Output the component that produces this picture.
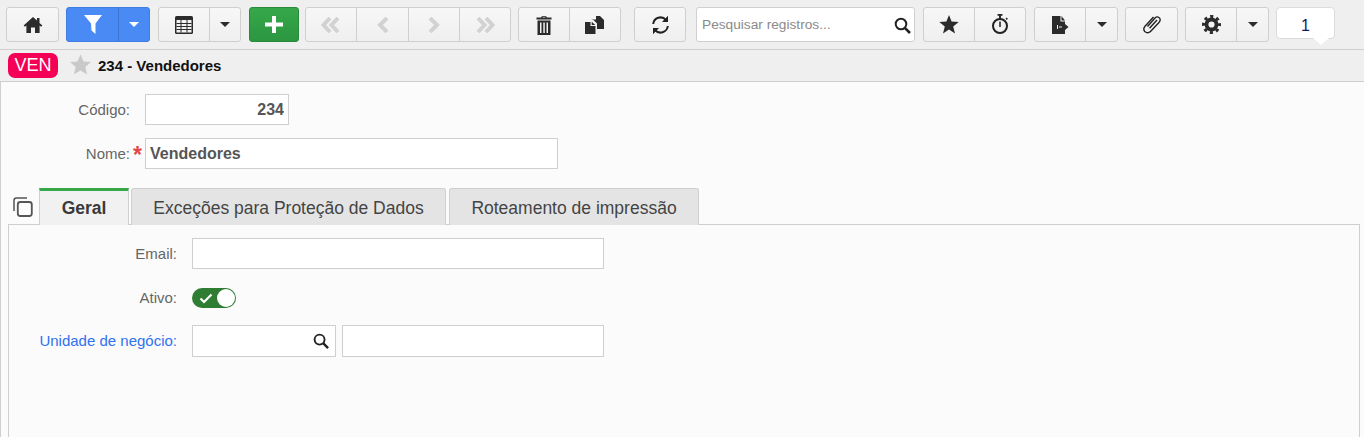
<div class="page">
  <header class="toolbar">
    <div class="group w53"><button class="btn f1" aria-label="Início">
      <svg width="20" height="18" viewBox="0 0 20 18"><path class="ic" d="M10 1 L0.6 9.6 L2 10.8 L3.4 9.6 V17 H8 V11.5 H12 V17 H16.6 V9.6 L18 10.8 L19.4 9.6 L16.5 6.9 V2 H14 V4.6 Z"/></svg>
    </button></div>

    <div class="group blue mgl7"><button class="btn w51" aria-label="Filtro">
      <svg width="18" height="19" viewBox="0 0 18 19"><path fill="#fff" d="M0 0 H18 L11.500 8.500 V19 L7.500 15.500 L7 8.500 Z"/></svg>
    </button><button class="btn w31" aria-label="Opções de filtro"><i class="caret white"></i></button></div>

    <div class="group mgl8"><button class="btn w50" aria-label="Tabela">
      <svg width="18" height="18" viewBox="0 0 18 18"><rect class="ic" width="18" height="18" rx="1.5"/><path fill="#f2f2f2" d="M1.5 4h15v12.5h-15z"/><path class="ic" d="M1.5 7h15v1h-15zM1.5 10h15v1h-15zM1.5 13h15v1h-15zM5.500 4h1v12.5h-1zM11.500 4h1v12.500h-1z"/></svg>
    </button><button class="btn w31" aria-label="Opções de tabela"><i class="caret"></i></button></div>

    <div class="group green mgl8 w50"><button class="btn f1" aria-label="Novo">
      <svg width="18" height="17" viewBox="0 0 18 17"><path fill="#fff" d="M7 0h4v6.500h7v4h-7V17H7v-6.500H0v-4h7z"/></svg>
    </button></div>

    <div class="group mgl6">
      <button class="btn w50" aria-label="Primeiro"><svg width="20" height="16" viewBox="0 0 20 16"><path class="nav" d="M9 1 L2.500 8 L9 15M17 1 L10.500 8 L17 15"/></svg></button><button class="btn w52" aria-label="Anterior"><svg width="12" height="16" viewBox="0 0 12 16"><path class="nav" d="M10 1 L3 8 L10 15"/></svg></button><button class="btn w51" aria-label="Próximo"><svg width="12" height="16" viewBox="0 0 12 16"><path class="nav" d="M2 1 L9 8 L2 15"/></svg></button><button class="btn w51" aria-label="Último"><svg width="20" height="16" viewBox="0 0 20 16"><path class="nav" d="M3 1 L9.500 8 L3 15M11 1 L17.500 8 L11 15"/></svg></button>
    </div>

    <div class="group mgl7">
      <button class="btn w50" aria-label="Excluir"><svg width="16" height="20" viewBox="0 0 16 20"><path class="ic" d="M5 2.500 C5 .5 11 .5 11 2.500 H15.500 V4.500 H.5 V2.500 Z M1.500 5.500 H14.500 V20 H1.500 Z"/><path fill="#f2f2f2" d="M4 7.500h1.500V18H4zM7.300 7.500h1.500V18H7.300zM10.500 7.500H12V18h-1.500zM6.300 2.400 C6.500 1.500 9.500 1.500 9.700 2.400Z"/></svg></button><button class="btn w51" aria-label="Copiar"><svg width="20" height="18" viewBox="0 0 20 18"><path class="ic" d="M6 3.500 H11 V0 H15 L19 4 V13 H12 V7.500 L8.500 4 Z"/><path class="ic" d="M0 6 H5.500 V10 H10.500 V18 H0 Z"/><path class="ic" d="M6.700 5.800 L10.300 9 H6.700Z"/></svg></button>
    </div>

    <div class="group mgl13 w52"><button class="btn f1" aria-label="Atualizar">
      <svg width="19" height="20" viewBox="0 0 19 20"><path fill="none" stroke="#222" stroke-width="2" d="M2.200 9 A7.300 7.300 0 0 1 15 5M16.800 11 A7.300 7.300 0 0 1 4 15"/><path fill="#222" d="M17 .8V7h-6zM2 19.200V13h6z"/></svg>
    </button></div>

    <div class="search">
      <span>Pesquisar registros...</span>
      <svg width="17" height="17" viewBox="0 0 17 17"><circle cx="7" cy="7" r="5.300" fill="none" stroke="#222" stroke-width="2"/><path stroke="#222" stroke-width="2.600" d="M10.800 10.800 L16 16"/></svg>
    </div>

    <div class="group mgl8">
      <button class="btn w50" aria-label="Favorito"><svg width="20" height="19" viewBox="0 0 20 19"><path class="ic" d="M10 0 L12.600 6.600 L19.700 7 L14.200 11.500 L16 18.500 L10 14.600 L4 18.500 L5.800 11.500 L.3 7 L7.400 6.600 Z"/></svg></button><button class="btn w51" aria-label="Cronômetro"><svg width="20" height="21" viewBox="0 0 20 21"><path class="ic" d="M7.500 0h5v1.800h-5zM9 1.500h2V5H9z"/><circle cx="10" cy="12" r="7" fill="none" stroke="#222" stroke-width="2"/><path class="ic" d="M9.200 7.500h1.600v5.500H9.200zM16.500 3.500l1.500 1.200-1.200 1.200-1.300-1.200z"/></svg></button>
    </div>

    <div class="group mgl8">
      <button class="btn w50" aria-label="Exportar"><svg width="17" height="18" viewBox="0 0 17 18"><path class="ic" d="M0 0 H8.500 V5.500 H13 V8 L16.500 11 L13 14 V18 H0 Z"/><path class="ic" d="M9.500 0 L13 4.500 H9.500 Z"/><path fill="#f2f2f2" d="M5 9h1v4H5zM7 10.500h3v1H7z"/></svg></button><button class="btn w32" aria-label="Opções de exportação"><i class="caret"></i></button>
    </div>

    <div class="group mgl7 w53"><button class="btn f1" aria-label="Anexos">
      <svg width="20" height="19" viewBox="0 0 20 19"><path fill="none" stroke="#222" stroke-width="1.400" d="M5.500 11.500 L13 3 C15 .8 18 2.200 18.200 4.500 C18.300 6 17.500 7 16.500 8.100 L8.500 16.500 C6.500 18.600 2.600 18 1.900 15 C1.500 13.500 2 12.300 3 11.200 L11.500 2"/><path fill="none" stroke="#222" stroke-width="1.400" d="M7.500 13.200 L15 5"/></svg>
    </button></div>

    <div class="group mgl7">
      <button class="btn w50" aria-label="Configurações"><svg width="19" height="19" viewBox="0 0 19 19"><circle cx="9.500" cy="9.500" r="5" fill="none" stroke="#2b2b2b" stroke-width="3.800"/><circle cx="9.500" cy="9.500" r="8" fill="none" stroke="#2b2b2b" stroke-width="3" stroke-dasharray="3.100 3.183" stroke-dashoffset="1.550"/></svg></button><button class="btn w32" aria-label="Opções de configuração"><i class="caret"></i></button>
    </div>

    <div class="count">1</div>
  </header>

  <div class="titlebar">
    <span class="tag">VEN</span>
    <svg class="fav" width="21" height="21" viewBox="0 0 22 21"><path fill="#c9c9c9" d="M11 0 L14.200 7.300 L22 8 L16.100 13.100 L17.900 21 L11 16.800 L4.100 21 L5.900 13.100 L0 8 L7.800 7.300 Z"/></svg>
    <strong>234 - Vendedores</strong>
  </div>

  <main class="content">
    <div class="row first">
      <label class="label-top" for="codigo">Código:</label>
      <span class="req"></span>
      <input id="codigo" class="code" value="234" readonly />
    </div>
    <div class="row second">
      <label class="label-top" for="nome">Nome:</label>
      <span class="req">*</span>
      <input id="nome" class="name" value="Vendedores" readonly />
    </div>

    <div class="tabs">
      <svg class="copy" width="20" height="20" viewBox="0 0 20 20"><path fill="none" stroke="#555" stroke-width="1.500" d="M1 14 V3.500 Q1 1 3.500 1 H14"/><rect x="4.800" y="5" width="14" height="14" rx="2.500" fill="none" stroke="#555" stroke-width="1.800"/></svg>
      <div class="tab active">Geral</div>
      <div class="tab t2">Exceções para Proteção de Dados</div>
      <div class="tab t3">Roteamento de impressão</div>
    </div>

    <section class="panel">
      <div class="frow r1">
        <label for="email">Email:</label>
        <input id="email" class="wide" />
      </div>
      <div class="frow r2">
        <span class="lbl">Ativo:</span>
        <span class="toggle">
          <svg width="14" height="11" viewBox="0 0 14 11"><path fill="none" stroke="#fff" stroke-width="2.200" d="M1.500 5.500 L5 9 L12.500 1.500"/></svg>
          <i></i>
        </span>
      </div>
      <div class="frow r3">
        <span class="lbl link">Unidade de negócio:</span>
        <div class="lookup">
          <svg width="16" height="16" viewBox="0 0 17 17"><circle cx="7" cy="7" r="5.300" fill="none" stroke="#222" stroke-width="2"/><path stroke="#222" stroke-width="2.600" d="M10.800 10.800 L16 16"/></svg>
        </div>
        <div class="desc"></div>
      </div>
    </section>
  </main>
</div>

<style>
  :global(body) { margin: 0; background: #fbfbfb; }
  .page { width: 1364px; height: 437px; overflow: hidden; font-family: "Liberation Sans", Arial, sans-serif; color: #444; }
  .toolbar { box-sizing: border-box; padding: 7px 0 0 6px; display: flex; align-items: flex-start; background: #efefef; border-bottom: 1px solid #cfcfcf; height: 50px; }
  .group { display: flex; height: 35px; box-sizing: border-box; border: 1px solid #cfcfcf; border-radius: 3px; background: linear-gradient(#f7f7f7, #efefef); overflow: hidden; }
  .btn { display: flex; align-items: center; justify-content: center; height: 100%; padding: 0; border: 0; background: transparent; border-left: 1px solid #cfcfcf; box-sizing: border-box; }
  .btn:first-child { border-left: 0; }
  .f1 { flex: 1; }
  .w31 { width: 31px; } .w32 { width: 32px; } .w50 { width: 50px; } .w51 { width: 51px; } .w52 { width: 52px; } .w53 { width: 53px; }
  .mgl6 { margin-left: 6px; } .mgl7 { margin-left: 7px; } .mgl8 { margin-left: 8px; } .mgl13 { margin-left: 13px; }
  .blue { background: #4a8af4; border-color: #3f7de0; }
  .blue .btn { border-left-color: #3b74d0; }
  .green { background: linear-gradient(#36a84a, #2b9640); border-color: #2a8a3b; }
  .ic { fill: #2b2b2b; }
  .nav { fill: none; stroke: #d2d2d2; stroke-width: 4; }
  .caret { display: block; width: 0; height: 0; border: 5px solid transparent; border-top: 5px solid #2b2b2b; border-bottom: 0; }
  .caret.white { border-top-color: #fff; }
  .search { margin-left: 10px; width: 219px; height: 35px; box-sizing: border-box; background: #fff; border: 1px solid #cfcfcf; border-radius: 3px; display: flex; align-items: center; justify-content: space-between; padding: 0 3px 0 5px; font-size: 13.7px; color: #8a8a8a; }
  .search svg { margin-top: 2px; }
  .count { position: relative; margin-left: 7px; width: 59px; height: 32px; box-sizing: border-box; background: #fff; border: 1px solid #dcdcdc; border-radius: 4px; text-align: center; font-size: 16px; line-height: 36px; color: #0d1a5e; }
  .count::after { content: ""; position: absolute; left: 36px; bottom: -7px; width: 0; height: 0; border-left: 8px solid transparent; border-right: 8px solid transparent; border-top: 7px solid #fff; }
  .titlebar { height: 32px; box-sizing: border-box; display: flex; align-items: center; background: #efefef; border-bottom: 1px solid #cfcfcf; padding-left: 8px; }
  .tag { width: 50px; height: 25px; box-sizing: border-box; background: #f50057; color: #fff; border-radius: 7px; font-size: 18px; line-height: 25px; text-align: center; }
  .fav { margin-left: 12px; margin-right: 7px; margin-top: -2px; }
  .titlebar strong { font-size: 15px; color: #111; }
  .content { border-left: 1px solid #cfcfcf; background: #fbfbfb; height: 355px; position: relative; }
  .row { display: flex; align-items: center; }
  .row.first { padding-top: 12px; }
  .row.second { padding-top: 13px; }
  .label-top { width: 129px; text-align: right; font-size: 15px; color: #666; }
  .req { width: 15px; color: #e0484c; font-size: 23px; font-weight: bold; line-height: 22px; text-align: center; height: 20px; }
  input { box-sizing: border-box; border: 1px solid #cfcfcf; background: #fff; border-radius: 0; outline: none; font-family: inherit; }
  .code { width: 144px; height: 31px; text-align: right; font-size: 16px; font-weight: bold; color: #555; padding: 0 4px; }
  .name { width: 413px; height: 31px; font-size: 16px; font-weight: bold; color: #555; padding: 0 4px; }
  .tabs { display: flex; align-items: flex-end; height: 37px; margin-top: 19px; padding-left: 12px; position: relative; z-index: 1; }
  .copy { width: 20px; margin: 0 6px 8px 0; }
  .tab { box-sizing: border-box; height: 37px; display: flex; align-items: center; justify-content: center; font-size: 17.5px; color: #444; background: #e4e4e4; border: 1px solid #cfcfcf; border-bottom: 0; border-radius: 3px 3px 0 0; padding-top: 3px; }
  .tab.active { width: 90px; background: #f1f1f1; border-top: 3px solid #36a84a; border-radius: 0; font-weight: bold; padding-top: 0; color: #3a3a3a; }
  .t2 { width: 315px; margin-left: 2px; }
  .t3 { width: 250px; margin-left: 3px; }
  .panel { margin: -1px 4px 0 7px; height: 230px; box-sizing: border-box; border: 1px solid #cfcfcf; background: #fbfbfb; padding-top: 13px; }
  .frow { display: flex; align-items: center; }
  .frow label, .lbl { width: 168px; text-align: right; margin-right: 15px; font-size: 15px; color: #666; flex: none; }
  .lbl { padding-bottom: 2px; }
  .lbl.link { color: #2f72f0; }
  .wide { width: 412px; height: 31px; }
  .r2 { margin-top: 19px; }
  .r3 { margin-top: 17px; }
  .toggle { box-sizing: border-box; width: 44px; height: 20px; border-radius: 10px; background: #2e7d32; display: flex; align-items: center; justify-content: space-between; padding: 0 1px 0 7px; }
  .toggle i { display: block; width: 18px; height: 18px; background: #fff; border-radius: 50%; }
  .lookup { box-sizing: border-box; width: 144px; height: 32px; background: #fff; border: 1px solid #cfcfcf; display: flex; align-items: center; justify-content: flex-end; padding-right: 6px; }
  .desc { box-sizing: border-box; width: 262px; height: 32px; background: #fff; border: 1px solid #cfcfcf; margin-left: 6px; }
</style>
